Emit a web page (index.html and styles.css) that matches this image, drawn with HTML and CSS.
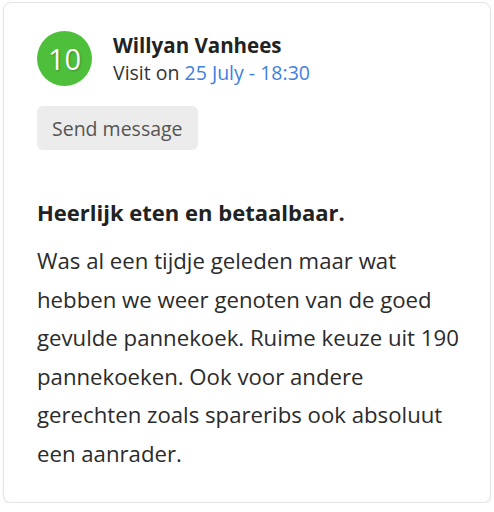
FILE: index.html
```html
<!DOCTYPE html>
<html lang="nl">
<head>
  <meta charset="UTF-8">
  <title>Review — Willyan Vanhees</title>
  <meta name="viewport" content="width=device-width, initial-scale=1">
  <link rel="stylesheet" href="styles.css">
</head>
<body>

<article class="review">
  <header class="review-head">
    <div class="score">10</div>
    <div class="who">
      <div class="name">Willyan Vanhees</div>
      <div class="visit">Visit on <a href="#">25 July - 18:30</a></div>
    </div>
  </header>

  <button class="send" type="button">Send message</button>

  <h2 class="title">Heerlijk eten en betaalbaar.</h2>
  <p class="text">Was al een tijdje geleden maar wat hebben we weer genoten van de goed gevulde pannekoek. Ruime keuze uit 190 pannekoeken. Ook voor andere gerechten zoals spareribs ook absoluut een aanrader.</p>
</article>

</body>
</html>
```

FILE: styles.css
```css
body {
  margin: 0;
  padding: 2px 3px 0 3px;
  font-family: "Open Sans", "Liberation Sans", sans-serif;
  background-color: #fff;
  color: #2b2b2b;
}

.review {
  border: 1px solid #e4e4e4;
  border-radius: 8px;
  box-shadow: 0 2px 2px rgba(0, 0, 0, 0.08);
  padding: 28px 20px 18px 33px;
  height: 501px;
  box-sizing: border-box;
}

.review-head {
  display: flex;
  align-items: center;
  gap: 21px;
}

.score {
  width: 55px;
  height: 55px;
  border-radius: 50%;
  background-color: #4dbf3b;
  color: #fff;
  font-size: 29px;
  display: flex;
  align-items: center;
  justify-content: center;
  text-shadow: 1px 1px 2px rgba(0, 0, 0, 0.25);
  flex: none;
}

.name {
  font-weight: 700;
  font-size: 20.5px;
  line-height: 27px;
  color: #222;
}

.visit {
  font-size: 19.5px;
  line-height: 27px;
  color: #333;
}

.visit a {
  color: #3f7fe0;
  text-decoration: none;
}

.send {
  margin-top: 20px;
  border: 0;
  border-radius: 6px;
  background-color: #ececec;
  color: #555;
  font-family: inherit;
  font-size: 19.5px;
  padding: 0 15px;
  height: 44px;
}

.title {
  margin: 48px 0 0;
  font-size: 22px;
  font-weight: 700;
  line-height: 28px;
  color: #222;
}

.text {
  margin: 16px 0 0;
  font-size: 22.2px;
  line-height: 38.5px;
  color: #2b2b2b;
}
```
